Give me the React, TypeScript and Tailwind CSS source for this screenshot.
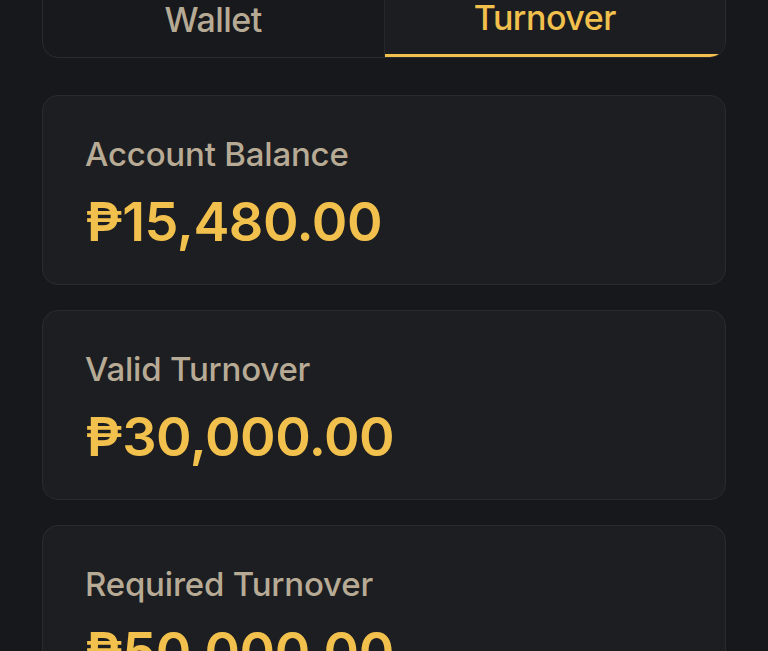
const cards = [
  { label: "Account Balance", amount: "₱15,480.00" },
  { label: "Valid Turnover", amount: "₱30,000.00" },
  { label: "Required Turnover", amount: "₱50,000.00" },
];

export default function App() {
  return (
    <div
      className="h-[651px] overflow-hidden bg-[#17181b] px-[42px]"
      style={{ fontFamily: "Inter, 'Noto Sans', sans-serif" }}
    >
      <div className="-mt-[20px] flex h-[78px] overflow-hidden rounded-[16px] border border-[#2a2b2f] bg-[#18191c]">
        <div className="flex flex-1 items-center justify-center pt-[0px] text-[34px] font-medium tracking-[-0.5px] text-[#b7aa95]">
          Wallet
        </div>
        <div className="flex flex-1 flex-col border-l border-[#26272a] bg-[#1c1d20]">
          <div className="flex flex-1 items-center justify-center pr-[20px] text-[34px] font-medium tracking-[-0.5px] text-[#f1c04d]">
            Turnover
          </div>
          <div className="h-[3px] bg-[#f1c04d]" />
        </div>
      </div>

      <div className="mt-[37px] flex flex-col gap-[25px]">
        {cards.map((c) => (
          <div
            key={c.label}
            className="h-[190px] rounded-[16px] border border-[#2a2b2f] bg-[#1d1e21] px-[42px] pt-[38px]"
          >
            <div className="text-[33px] leading-[40px] font-medium tracking-[-0.2px] text-[#b8ab96]">
              {c.label}
            </div>
            <div className="mt-[18px] text-[54px] leading-[60px] font-semibold tracking-[-0.5px] text-[#f1c04d]">
              {c.amount}
            </div>
          </div>
        ))}
      </div>
    </div>
  );
}
